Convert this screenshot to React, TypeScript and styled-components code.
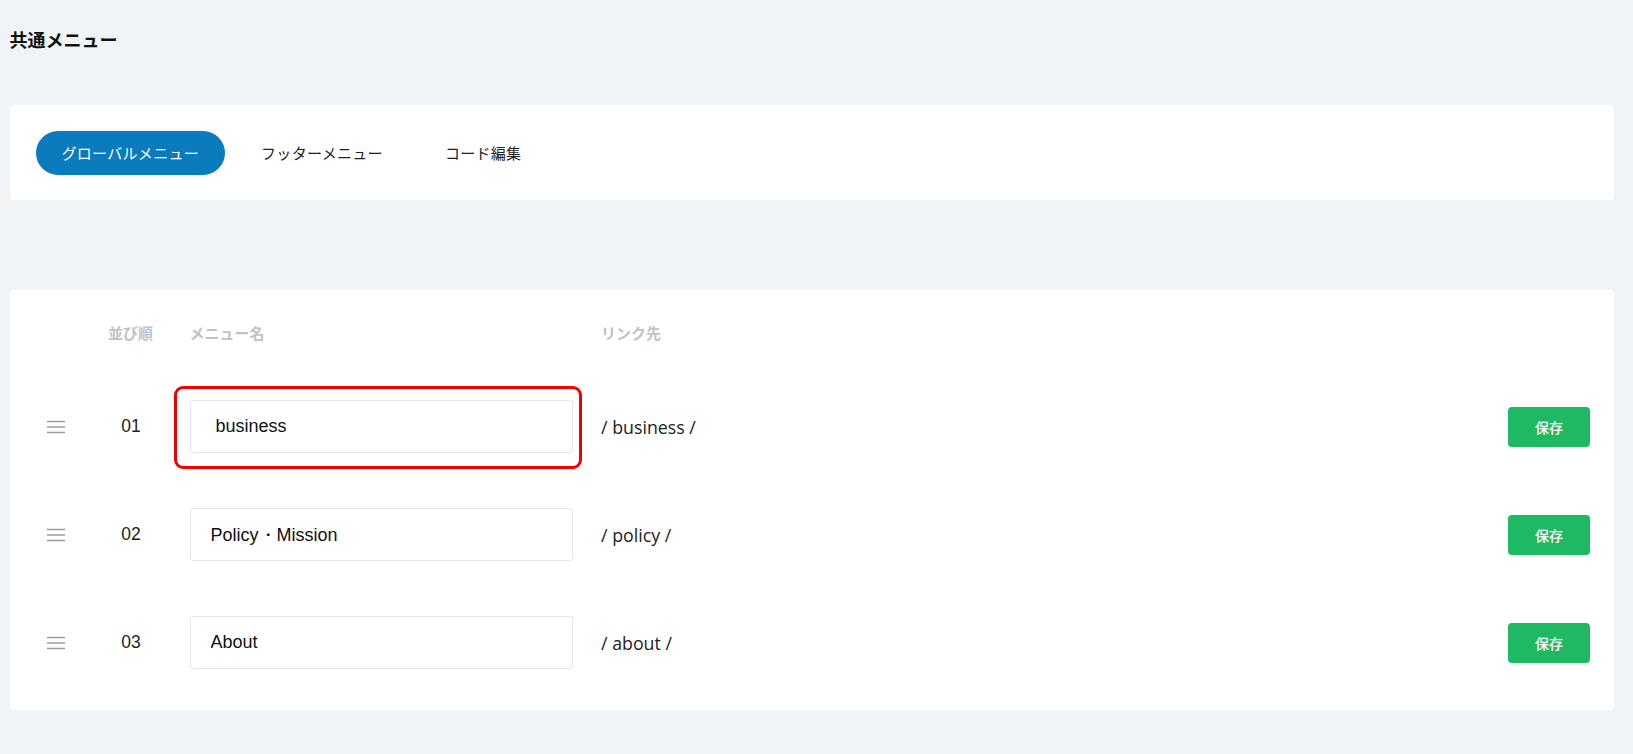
import React from 'react';
import styled, { createGlobalStyle } from 'styled-components';

/**
 * data
 * _______________________________________________________________________________
 */
type MenuItem = {
  order: string;
  name: string;
  link: string;
  highlighted?: boolean;
  inset?: number;
};

const menuItems: MenuItem[] = [
  { order: '01', name: 'business', link: '/ business /', highlighted: true, inset: 25 },
  { order: '02', name: 'Policy・Mission', link: '/ policy /' },
  { order: '03', name: 'About', link: '/ about /' },
];

const tabs = ['グローバルメニュー', 'フッターメニュー', 'コード編集'];

const DragHandle = () => (
  <svg width='18' height='14' viewBox='0 0 18 14' fill='none'>
    <path d='M0 1.5H18M0 7H18M0 12.5H18' stroke='#9c9c9c' strokeWidth='1.5' />
  </svg>
);

const App = () => {
  /**
   * template
   * _______________________________________________________________________________
   */
  return (
    <Root>
      <GlobalStyle />
      <PageTitle>共通メニュー</PageTitle>

      <TabCard>
        {tabs.map((tab, i) => (
          <Tab key={tab} $active={i === 0}>
            {tab}
          </Tab>
        ))}
      </TabCard>

      <TableCard>
        <HeaderRow>
          <span />
          <HeadLabel $center>並び順</HeadLabel>
          <HeadLabel>メニュー名</HeadLabel>
          <HeadLabel>リンク先</HeadLabel>
          <span />
        </HeaderRow>

        <RowList>
          {menuItems.map((item) => (
            <Row key={item.order}>
              <Handle>
                <DragHandle />
              </Handle>
              <Order>{item.order}</Order>
              <InputCell>
                <NameInput defaultValue={item.name} $inset={item.inset ?? 20} />
                {item.highlighted && <Highlight />}
              </InputCell>
              <LinkText>{item.link}</LinkText>
              <SaveButton>保存</SaveButton>
            </Row>
          ))}
        </RowList>
      </TableCard>
    </Root>
  );
};

export default App;

/**
 * styled-component
 * _______________________________________________________________________________
 */

const GlobalStyle = createGlobalStyle`
  html, body {
    margin: 0;
    padding: 0;
    background: #f0f4f7;
  }
  body {
    font-family: 'Liberation Sans', 'Noto Sans CJK JP', sans-serif;
    color: #222;
  }
  * {
    box-sizing: border-box;
  }
`;

const Root = styled.main`
  padding: 29px 19px 44px 9.5px;
`;

const PageTitle = styled.h1`
  margin: 0 0 56px;
  font-family: 'Noto Sans CJK JP', sans-serif;
  font-size: 18px;
  line-height: 20px;
  font-weight: 700;
  color: #111;
`;

const TabCard = styled.nav`
  display: flex;
  align-items: center;
  gap: 10px;
  height: 95px;
  padding: 0 26px;
  background: #fff;
  border-radius: 4px;
  margin-bottom: 90px;
`;

const Tab = styled.button<{ $active?: boolean }>`
  height: 44px;
  padding: 0 26px;
  border: none;
  border-radius: 22px;
  font-family: 'Noto Sans CJK JP', sans-serif;
  font-size: 15px;
  letter-spacing: 0.3px;
  cursor: pointer;
  background: ${({ $active }) => ($active ? '#0a7bbd' : 'transparent')};
  color: ${({ $active }) => ($active ? '#fff' : '#222')};
`;

const TableCard = styled.section`
  background: #fff;
  border-radius: 4px;
  padding: 32px 24px 41px 26px;
`;

const gridColumns = `
  display: grid;
  grid-template-columns: 40px 114px 383.5px 1fr 82px;
  align-items: center;
`;

const HeaderRow = styled.div`
  ${gridColumns}
  height: 20px;
`;

const HeadLabel = styled.span<{ $center?: boolean }>`
  font-family: 'Noto Sans CJK JP', sans-serif;
  font-size: 15px;
  font-weight: 700;
  color: #c2c2c2;
  text-align: ${({ $center }) => ($center ? 'center' : 'left')};
  padding-right: ${({ $center }) => ($center ? '4px' : '0')};

  &:nth-child(4) {
    padding-left: 28px;
  }
`;

const RowList = styled.div`
  display: flex;
  flex-direction: column;
  gap: 55px;
  margin-top: 58px;
`;

const Row = styled.div`
  ${gridColumns}
  height: 53px;
`;

const Handle = styled.div`
  display: flex;
  justify-content: center;
  align-items: center;
`;

const Order = styled.span`
  font-size: 17.5px;
  color: #222;
  text-align: center;
  padding-right: 3px;
`;

const InputCell = styled.div`
  position: relative;
  height: 53px;
`;

const NameInput = styled.input<{ $inset: number }>`
  width: 100%;
  height: 100%;
  border: 1px solid #e3e6e9;
  border-radius: 3px;
  padding: 0 12px 0 ${({ $inset }) => $inset}px;
  font-family: 'Liberation Sans', Arial, sans-serif;
  font-size: 18px;
  color: #111;
  outline: none;
  background: #fff;
`;

const Highlight = styled.div`
  position: absolute;
  top: -14px;
  left: -16px;
  right: -9px;
  bottom: -16px;
  border: 3px solid #f20000;
  border-radius: 9px;
  pointer-events: none;
`;

const LinkText = styled.span`
  padding-left: 28px;
  font-family: 'Open Sans', sans-serif;
  font-size: 17.8px;
  color: #222;
`;

const SaveButton = styled.button`
  width: 82px;
  height: 40px;
  border: none;
  border-radius: 4px;
  background: #1fb964;
  color: #fff;
  font-family: 'Noto Sans CJK JP', sans-serif;
  font-size: 14px;
  font-weight: 500;
  cursor: pointer;
`;
